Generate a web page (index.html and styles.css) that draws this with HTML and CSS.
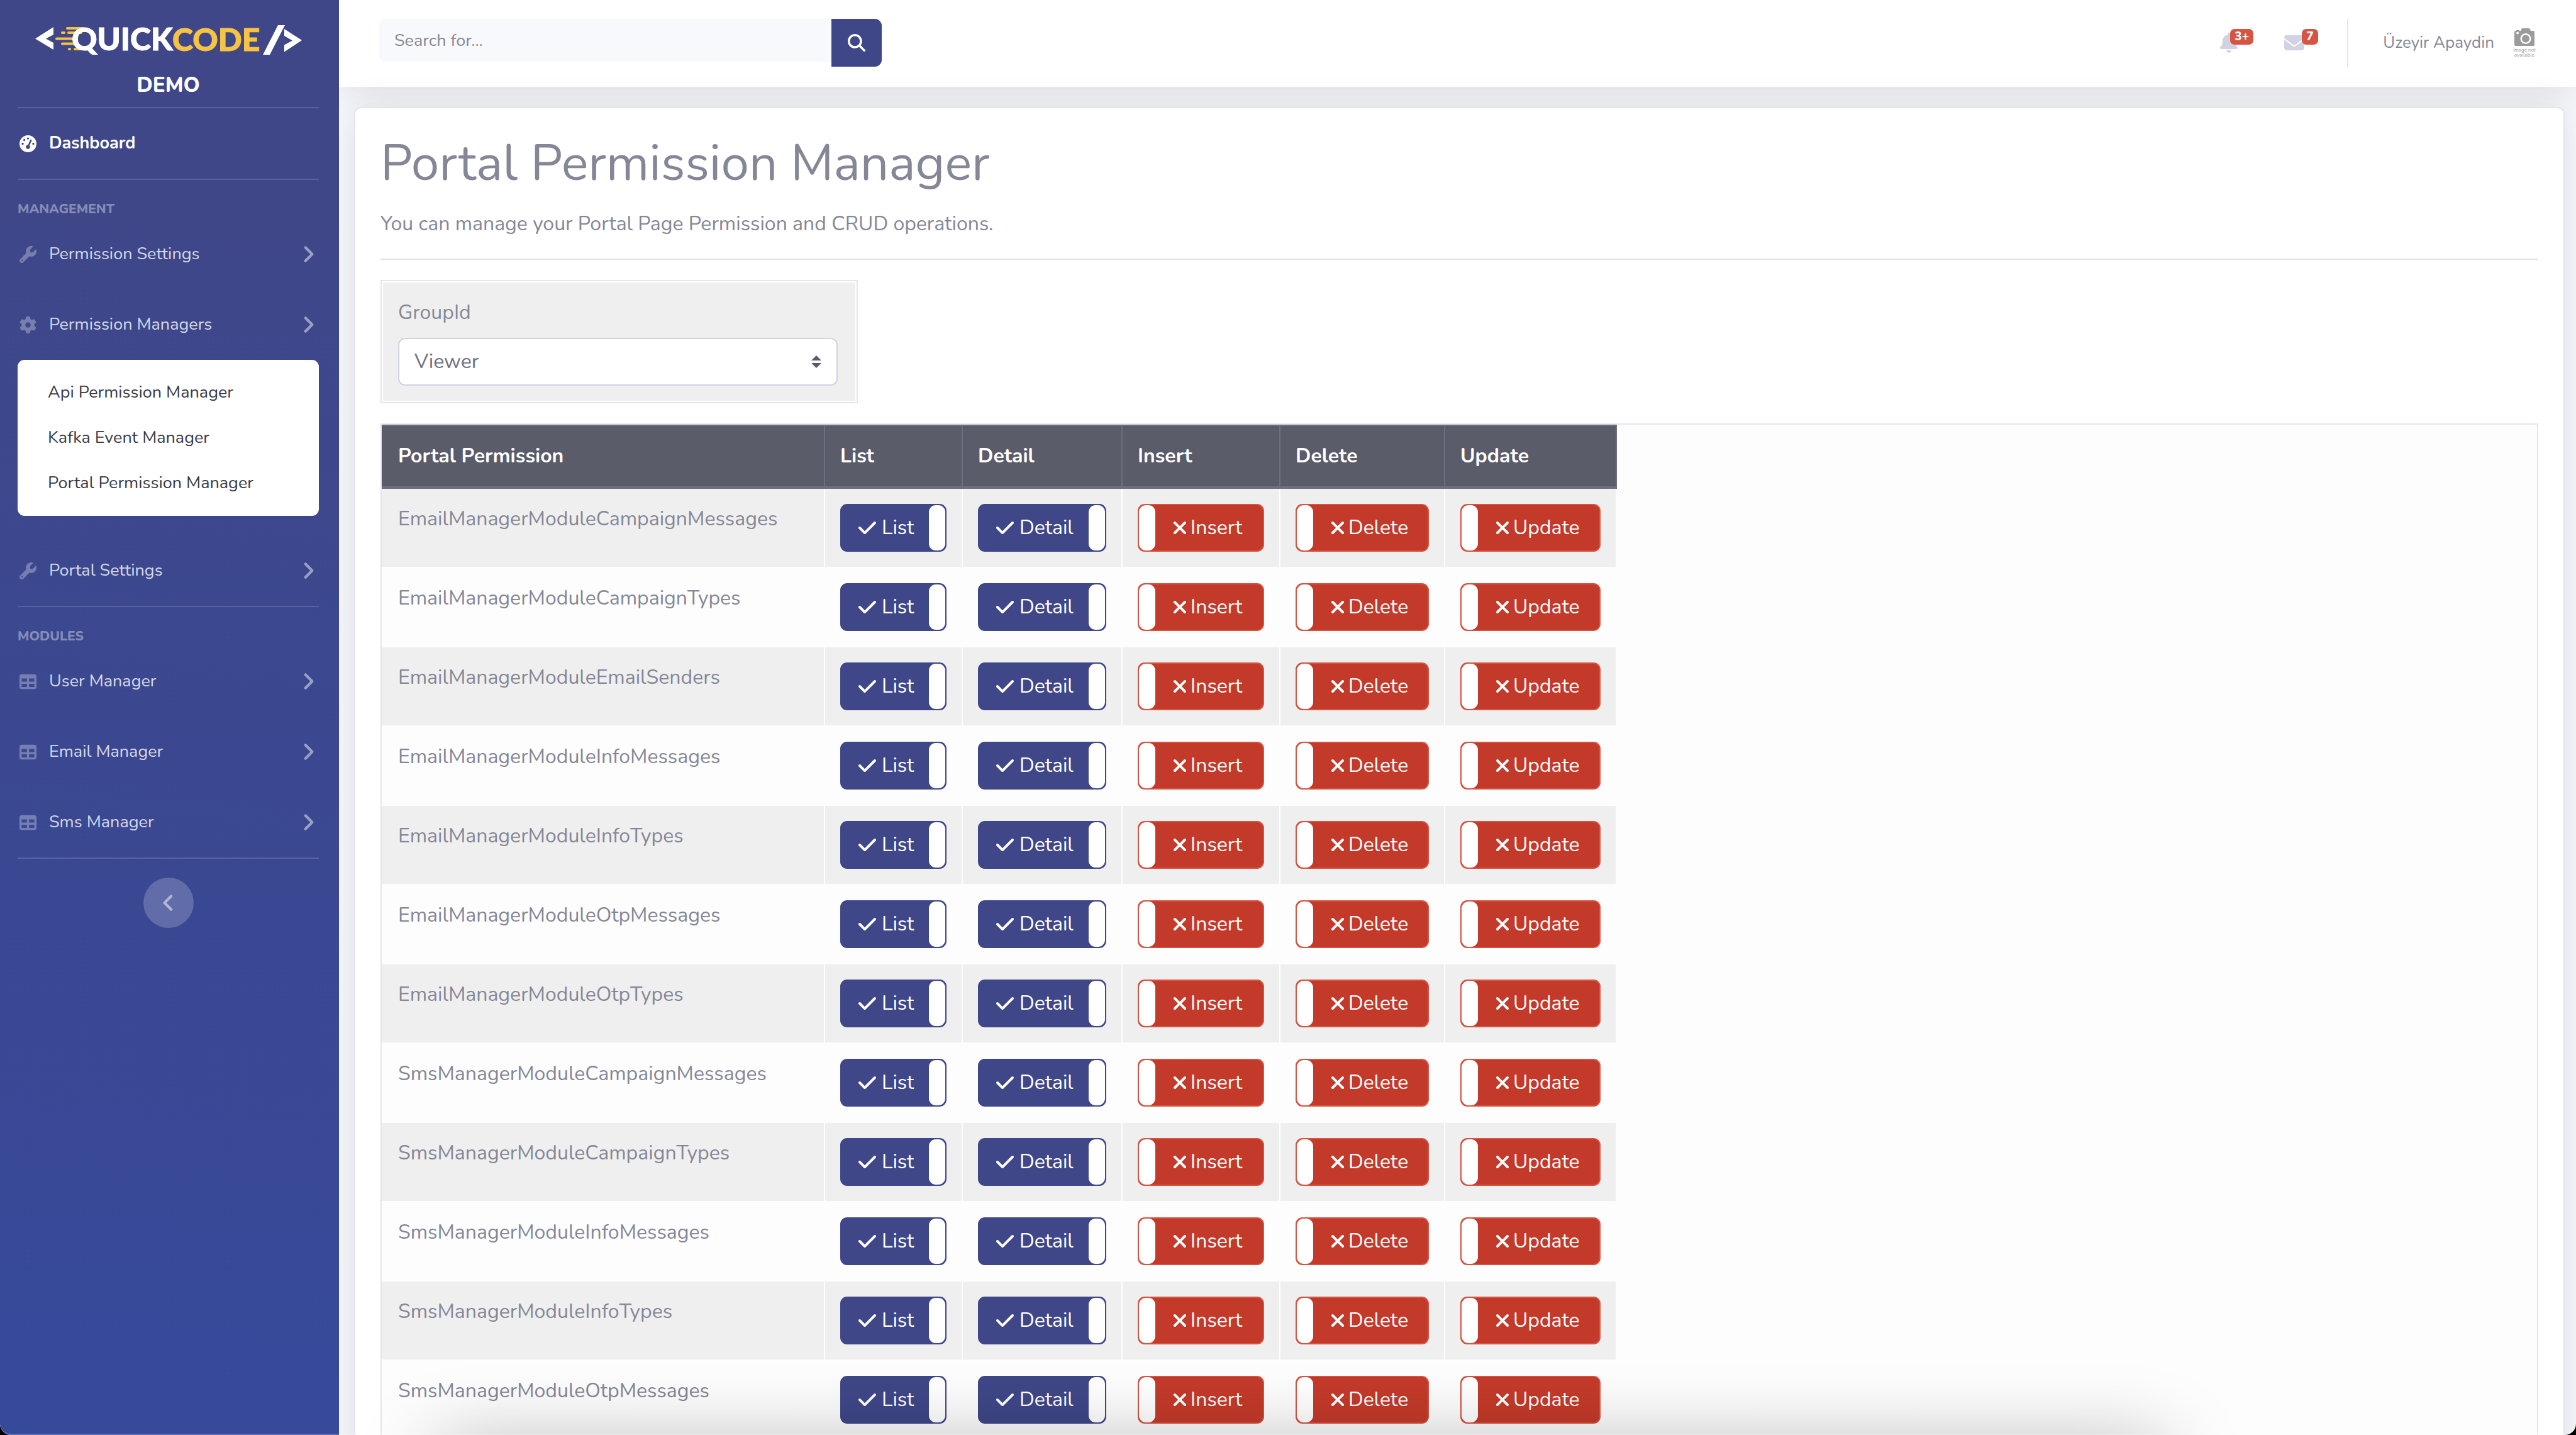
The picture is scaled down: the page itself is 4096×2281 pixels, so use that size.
FILE: index.html
```html
<!DOCTYPE html>
<html lang="en">
<head>
<meta charset="utf-8">
<title>Portal Permission Manager</title>
<link rel="stylesheet" href="styles.css">
</head>
<body>
<svg class="sprite" aria-hidden="true">
  <symbol id="i-gauge" viewBox="0 0 512 512"><path d="M0 256a256 256 0 1 1 512 0A256 256 0 1 1 0 256zM288 96a32 32 0 1 0-64 0 32 32 0 1 0 64 0zM256 416c35.300 0 64-28.700 64-64c0-17.400-6.900-33.100-18.100-44.600L366 161.700c5.300-12.100-.2-26.300-12.300-31.600s-26.300 .2-31.600 12.300L257.900 288c-.6 0-1.300 0-1.900 0c-35.300 0-64 28.700-64 64s28.700 64 64 64zM176 144a32 32 0 1 0-64 0 32 32 0 1 0 64 0zM96 288a32 32 0 1 0 0-64 32 32 0 1 0 0 64zm352-32a32 32 0 1 0-64 0 32 32 0 1 0 64 0z"/></symbol>
  <symbol id="i-wrench" viewBox="0 0 512 512"><path d="M352 320c88.400 0 160-71.600 160-160c0-15.300-2.200-30.100-6.200-44.200c-3.100-10.800-16.400-13.200-24.300-5.300l-76.800 76.800c-3 3-7.100 4.700-11.300 4.700H336c-8.800 0-16-7.200-16-16V118.600c0-4.200 1.700-8.300 4.700-11.300l76.800-76.800c7.900-7.900 5.400-21.200-5.300-24.300C382.100 2.200 367.300 0 352 0C263.600 0 192 71.600 192 160c0 19.100 3.400 37.500 9.500 54.500L19.900 396.100C7.200 408.800 0 426.100 0 444.100C0 481.600 30.400 512 67.900 512c18 0 35.300-7.200 48-19.900L297.500 310.500c17 6.200 35.400 9.500 54.500 9.500zM80 408a24 24 0 1 1 0 48 24 24 0 1 1 0-48z"/></symbol>
  <symbol id="i-gear" viewBox="0 0 512 512"><path d="M495.900 166.600c3.200 8.700 .5 18.400-6.400 24.600l-43.300 39.400c1.100 8.300 1.700 16.800 1.700 25.400s-.6 17.100-1.700 25.400l43.300 39.400c6.900 6.200 9.600 15.900 6.400 24.600c-4.400 11.900-9.700 23.300-15.800 34.300l-4.700 8.100c-6.600 11-14 21.400-22.100 31.200c-5.900 7.200-15.700 9.600-24.500 6.800l-55.700-17.700c-13.400 10.300-28.200 18.900-44 25.400l-12.500 57.100c-2 9.100-9 16.300-18.200 17.800c-13.800 2.300-28 3.500-42.500 3.500s-28.700-1.200-42.500-3.500c-9.200-1.500-16.200-8.700-18.200-17.800l-12.500-57.100c-15.800-6.500-30.600-15.100-44-25.400L83.100 425.900c-8.800 2.800-18.600 .3-24.500-6.800c-8.100-9.800-15.500-20.200-22.100-31.200l-4.700-8.100c-6.100-11-11.400-22.400-15.800-34.300c-3.200-8.700-.5-18.400 6.400-24.600l43.300-39.400C64.600 273.100 64 264.600 64 256s.6-17.100 1.700-25.400L22.400 191.200c-6.900-6.200-9.600-15.900-6.400-24.600c4.400-11.900 9.700-23.300 15.800-34.300l4.700-8.100c6.600-11 14-21.400 22.100-31.200c5.900-7.200 15.700-9.600 24.500-6.800l55.700 17.700c13.400-10.300 28.200-18.900 44-25.400l12.500-57.100c2-9.100 9-16.300 18.200-17.800C227.300 1.200 241.500 0 256 0s28.700 1.200 42.500 3.500c9.200 1.500 16.200 8.700 18.200 17.800l12.500 57.100c15.800 6.500 30.600 15.100 44 25.400l55.700-17.700c8.800-2.800 18.600-.3 24.500 6.800c8.100 9.800 15.500 20.200 22.100 31.200l4.700 8.100c6.100 11 11.400 22.400 15.800 34.300zM256 336a80 80 0 1 0 0-160 80 80 0 1 0 0 160z"/></symbol>
  <symbol id="i-table" viewBox="0 0 512 512"><path d="M64 256V160H224v96H64zm0 64H224v96H64V320zm224 96V320H448v96H288zM448 256H288V160H448v96zM64 32C28.700 32 0 60.700 0 96V416c0 35.300 28.700 64 64 64H448c35.300 0 64-28.700 64-64V96c0-35.300-28.700-64-64-64H64z"/></symbol>
  <symbol id="i-right" viewBox="0 0 320 512"><path d="M278.600 233.400c12.500 12.500 12.500 32.800 0 45.300l-160 160c-12.500 12.500-32.800 12.500-45.300 0s-12.500-32.800 0-45.300L210.700 256 73.400 118.600c-12.500-12.500-12.500-32.800 0-45.300s32.800-12.500 45.300 0l160 160z"/></symbol>
  <symbol id="i-left" viewBox="0 0 320 512"><path d="M41.400 233.400c-12.500 12.500-12.500 32.800 0 45.300l160 160c12.500 12.500 32.800 12.500 45.300 0s12.500-32.800 0-45.300L109.300 256 246.600 118.600c12.500-12.500 12.500-32.800 0-45.300s-32.800-12.500-45.300 0l-160 160z"/></symbol>
  <symbol id="i-search" viewBox="0 0 512 512"><path d="M416 208c0 45.900-14.900 88.300-40 122.700L502.600 457.400c12.500 12.500 12.500 32.800 0 45.300s-32.800 12.500-45.300 0L330.700 376c-34.400 25.200-76.800 40-122.700 40C93.100 416 0 322.900 0 208S93.100 0 208 0S416 93.100 416 208zM208 352a144 144 0 1 0 0-288 144 144 0 1 0 0 288z"/></symbol>
  <symbol id="i-bell" viewBox="0 0 448 512"><path d="M224 0c-17.700 0-32 14.300-32 32V51.200C119 66 64 130.600 64 208v18.800c0 47-17.300 92.400-48.500 127.600l-7.400 8.300c-8.400 9.400-10.400 22.900-5.300 34.400S19.400 416 32 416H416c12.600 0 24-7.400 29.200-18.900s3.100-25-5.300-34.400l-7.400-8.300C401.300 319.200 384 273.900 384 226.800V208c0-77.400-55-142-128-156.800V32c0-17.700-14.300-32-32-32zm45.300 493.300c12-12 18.700-28.300 18.700-45.300H224 160c0 17 6.700 33.300 18.700 45.300s28.300 18.700 45.300 18.700s33.300-6.700 45.300-18.700z"/></symbol>
  <symbol id="i-mail" viewBox="0 0 512 512"><path d="M48 64C21.500 64 0 85.500 0 112c0 15.100 7.100 29.300 19.200 38.400L236.800 313.600c11.400 8.500 27 8.500 38.400 0L492.800 150.400c12.100-9.100 19.200-23.300 19.200-38.400c0-26.500-21.500-48-48-48H48zM0 176V384c0 35.300 28.700 64 64 64H448c35.300 0 64-28.700 64-64V176L294.400 339.200c-22.800 17.100-54 17.100-76.800 0L0 176z"/></symbol>
  <symbol id="i-check" viewBox="0 0 448 512"><path d="M438.600 105.400c12.500 12.500 12.500 32.800 0 45.300l-256 256c-12.500 12.500-32.800 12.500-45.300 0l-128-128c-12.500-12.500-12.500-32.800 0-45.300s32.800-12.500 45.300 0L160 338.700 393.400 105.400c12.500-12.500 32.800-12.500 45.300 0z"/></symbol>
  <symbol id="i-x" viewBox="0 0 320 512"><path d="M310.600 150.600c12.500-12.500 12.500-32.800 0-45.300s-32.800-12.500-45.300 0L160 210.700 54.600 105.400c-12.500-12.500-32.800-12.500-45.300 0s-12.500 32.800 0 45.300L114.700 256 9.400 361.400c-12.500 12.500-12.500 32.800 0 45.300s32.800 12.500 45.300 0L160 301.300 265.400 406.600c12.500 12.500 32.800 12.500 45.300 0s12.500-32.800 0-45.300L205.300 256 310.600 150.600z"/></symbol>
</svg>

<div class="app">
  <nav class="sidebar">
    <a class="brand" href="#">
      <svg class="logo" viewBox="0 -12 424 72" role="img" aria-label="QuickCode">
        <path fill="#fff" d="M29 5v12l-12 6.500L29 30v11L0 23.500z"/>
        <g stroke="#f6c344" stroke-width="4" stroke-linecap="round"><path d="M51 7h24M43 14h3M53 14h20M34 23.500h28M43 31.500h22M54 40h1M63 40h12"/></g>
        <text class="logo-quick" x="58" y="42">QUICK</text>
        <text class="logo-code" x="218" y="43">CODE</text>
        <path fill="#fff" d="M386 2h11l-24 47h-11zM396 8v11l13 7.500-13 7v11l28-18.500z"/>
      </svg>
      <span class="brand-name">DEMO</span>
    </a>
    <hr class="rule">
    <a class="item active" href="#"><svg class="lead"><use href="#i-gauge"/></svg>Dashboard</a>
    <hr class="rule">
    <div class="heading">Management</div>
    <a class="item" href="#"><svg class="lead"><use href="#i-wrench"/></svg>Permission Settings<svg class="arrow"><use href="#i-right"/></svg></a>
    <a class="item" href="#"><svg class="lead"><use href="#i-gear"/></svg>Permission Managers<svg class="arrow"><use href="#i-right"/></svg></a>
    <div class="submenu">
      <a href="#">Api Permission Manager</a>
      <a href="#">Kafka Event Manager</a>
      <a href="#">Portal Permission Manager</a>
    </div>
    <a class="item" href="#"><svg class="lead"><use href="#i-wrench"/></svg>Portal Settings<svg class="arrow"><use href="#i-right"/></svg></a>
    <hr class="rule">
    <div class="heading">Modules</div>
    <a class="item" href="#"><svg class="lead"><use href="#i-table"/></svg>User Manager<svg class="arrow"><use href="#i-right"/></svg></a>
    <a class="item" href="#"><svg class="lead"><use href="#i-table"/></svg>Email Manager<svg class="arrow"><use href="#i-right"/></svg></a>
    <a class="item" href="#"><svg class="lead"><use href="#i-table"/></svg>Sms Manager<svg class="arrow"><use href="#i-right"/></svg></a>
    <hr class="rule">
    <button class="collapse" type="button" aria-label="Collapse sidebar"><svg><use href="#i-left"/></svg></button>
  </nav>

  <div class="page">
    <header class="topbar">
      <form class="search">
        <input type="text" placeholder="Search for..." aria-label="Search for">
        <button type="button" aria-label="Search"><svg><use href="#i-search"/></svg></button>
      </form>
      <div class="tools">
        <a class="alert bell" href="#" aria-label="Alerts"><svg><use href="#i-bell"/></svg><span class="badge">3+</span></a>
        <a class="alert mail" href="#" aria-label="Messages"><svg><use href="#i-mail"/></svg><span class="badge">7</span></a>
        <span class="separator"></span>
        <a class="user" href="#">Üzeyir Apaydin
          <svg class="avatar" viewBox="-6 0 44 52">
            <path fill="#9b9b9b" fill-rule="evenodd" d="M2 7h1V6h5v1h2l2-4h12l2 4h4q2 0 2 2v20q0 2-2 2H2q-2 0-2-2V9q0-2 2-2zM18 11a8.500 8.500 0 1 0 .1 0zM18 13.500a6 6 0 1 1-.1 0zM5 8.500a2 2 0 1 0 .1 0z"/>
            <text x="16" y="40">image not</text>
            <text x="16" y="48">available</text>
          </svg>
        </a>
      </div>
    </header>

    <main class="card">
      <h1>Portal Permission Manager</h1>
      <p>You can manage your Portal Page Permission and CRUD operations.</p>
      <hr>
      <div class="filter">
        <label for="group">GroupId</label>
        <div class="select">
          <select id="group"><option>Viewer</option></select>
          <svg viewBox="0 0 16 20"><path d="M8 0l8 8H0zM8 20l8-8H0z"/></svg>
        </div>
      </div>
      <div class="grid">
        <table>
          <colgroup><col class="c-name"><col class="c-list"><col class="c-detail"><col class="c-insert"><col class="c-delete"><col class="c-update"></colgroup>
          <thead><tr><th>Portal Permission</th><th>List</th><th>Detail</th><th>Insert</th><th>Delete</th><th>Update</th></tr></thead>
          <tbody id="rows"></tbody>
        </table>
      </div>
    </main>
  </div>
</div>
<script src="app.js"></script>
</body>
</html>
```
FILE: styles.css
```css
* { box-sizing: border-box; }
html { background: #000; }
body {
  margin: 0;
  font-family: Nunito, Lato, "Open Sans", sans-serif;
  font-size: 32px;
  line-height: 48px;
  color: #858796;
}
a { color: inherit; text-decoration: none; }
input, select, button { font: inherit; }
button { border: 0; padding: 0; cursor: pointer; }
svg { display: block; fill: currentColor; }
.sprite { position: absolute; width: 0; height: 0; }

.app {
  position: relative;
  display: flex;
  height: 100vh;
  overflow: hidden;
  background: #f8f9fc;
  border-radius: 0 0 18px 18px;
}
/* soft shade rising from the lower edge of the window */
.app::before {
  content: "";
  position: absolute;
  z-index: 2;
  top: 100%;
  left: 17%;
  right: 16%;
  height: 60px;
  box-shadow: 0 20px 120px rgba(0, 0, 0, .38);
}
.app::after {
  content: "";
  position: absolute;
  z-index: 3;
  inset: 0;
  border-bottom: 2px solid rgba(255, 255, 255, .2);
  border-radius: 0 0 18px 18px;
  pointer-events: none;
}

.sidebar {
  flex: none;
  width: 539px;
  padding: 26px 32px 0 28px;
  display: flex;
  flex-direction: column;
  font-size: 27px;
  color: rgba(255, 255, 255, .8);
  background: linear-gradient(185deg, #3f4788 12%, #36499b 100%);
}
.brand { display: flex; flex-direction: column; gap: 18px; align-items: center; padding-bottom: 14px; }
.logo { width: 424px; height: 72px; }
.logo text { font-family: Lato, sans-serif; font-size: 50px; font-weight: 900; }
.logo-quick { fill: #fff; stroke: #fff; stroke-width: 1; }
.logo-code { fill: #f6c344; stroke: #f6c344; stroke-width: 1; }
.brand-name { font-size: 33px; line-height: 40px; font-weight: 800; color: #fff; }
.rule { flex: none; width: 100%; height: 2px; margin: 0; border: 0; background: rgba(255, 255, 255, .15); }
.item { flex: none; display: flex; align-items: center; height: 112px; padding: 0 6px 0 3px; }
.item.active { color: #fff; font-weight: 700; }
.lead { width: 27px; height: 27px; margin-right: 20px; opacity: .38; }
.active .lead { opacity: 1; }
.arrow { width: 22px; height: 34px; margin-left: auto; opacity: .6; }
.heading { padding-top: 30px; font-size: 21px; line-height: 32px; font-weight: 800; text-transform: uppercase; color: rgba(255, 255, 255, .4); }
.submenu { display: flex; flex-direction: column; padding: 16px 48px; margin-bottom: 31px; border-radius: 11px; background: #fff; color: #3a3b45; }
.submenu a { line-height: 72px; }
.collapse { align-self: center; display: grid; place-items: center; width: 80px; height: 80px; margin-top: 30px; border-radius: 50%; background: rgba(255, 255, 255, .2); color: rgba(255, 255, 255, .5); }
.collapse svg { width: 22px; height: 34px; }

.page { flex: 1; min-width: 0; display: flex; flex-direction: column; overflow: hidden; }
.topbar { flex: none; display: flex; justify-content: space-between; height: 138px; padding: 30px 60px 32px 64px; background: #fff; box-shadow: 0 5px 56px rgba(58, 59, 69, .15); font-size: 26px; }
.search { display: flex; align-items: flex-start; width: 799px; }
.search input { flex: 1; min-width: 0; height: 69px; padding: 0 24px; border: 0; border-radius: 11px 0 0 11px; background: #f8f9fc; color: #6e707e; font-size: 27px; }
.search input::placeholder { color: #858796; opacity: 1; }
.search button { display: grid; place-items: center; width: 80px; height: 76px; border-radius: 0 11px 11px 0; background: #3f4788; color: #fff; }
.search svg { width: 28px; height: 28px; }
.tools { display: flex; align-items: center; }
.alert { position: relative; color: #d1d3e2; }
.alert svg { height: 32px; }
.bell { margin-right: 74px; }
.bell svg { width: 28px; }
.mail { margin-right: 68px; }
.mail svg { width: 32px; }
.badge { position: absolute; top: -6px; left: 16px; height: 25px; padding: 0 7px; border-radius: 7px; background: #d65442; color: #fff; font-size: 19px; line-height: 25px; font-weight: 800; }
.mail .badge { left: 28px; }
.separator { width: 2px; height: 76px; margin-right: 55px; background: #e3e6f0; }
.user { display: flex; align-items: center; gap: 26px; }
.avatar { width: 44px; height: 52px; }
.avatar text { font-size: 8px; text-anchor: middle; fill: #9b9b9b; }

.card { flex: 1 0 auto; margin: 32px 18px 0 24px; padding: 40px; border: 2px solid #e3e6f0; border-radius: 11px; background: #fff; box-shadow: 0 5px 56px rgba(58, 59, 69, .15); }
.card h1 { margin: 0 0 24px; font-size: 80px; line-height: 96px; font-weight: 400; }
.card p { margin: 0 0 31px; }
.card > hr { height: 2px; margin: 0 0 32px; border: 0; background: #e4e4e8; }
.filter { width: 759px; margin-bottom: 32px; padding: 26px 30px 26px 26px; border: 2px solid #e3e6f0; outline: 2px solid #fff; outline-offset: -4px; background: #efefef; }
.filter label { display: block; margin-bottom: 16px; }
.select { position: relative; }
.select select { display: block; width: 100%; height: 76px; padding: 0 24px; border: 2px solid #d1d3e2; border-radius: 11px; background: #fff; color: #6e707e; appearance: none; }
.select svg { position: absolute; right: 26px; top: 28px; width: 16px; height: 20px; fill: #5a5c69; pointer-events: none; }

.grid { border: 2px solid #e3e6f0; background: #fdfdfd; }
table { table-layout: fixed; width: 1964px; border-spacing: 0; }
.c-name { width: 705px; }
.c-list { width: 219px; }
.c-detail { width: 254px; }
.c-insert { width: 251px; }
.c-delete { width: 262px; }
.c-update { width: 273px; }
th { height: 102px; padding: 0 24px; border: 0 solid #6e7081; border-width: 2px 2px 4px 0; background: #5a5c69; color: #fff; font-weight: 700; text-align: left; }
td { height: 126px; padding: 24px; border: 0 solid #fdfdfd; border-width: 0 2px 2px 0; vertical-align: top; }
th:first-child, td:first-child { padding-left: 26px; }
tbody tr:nth-child(odd) { background: #efefef; }

.toggle { display: flex; align-items: center; height: 76px; border: 2px solid #3f4788; border-radius: 11px; background: #3f4788; color: #fff; cursor: pointer; }
.toggle input { flex: none; order: 3; appearance: none; width: 26px; height: 72px; margin: 0 0 0 auto; border-radius: 11px; background: #fff; }
.toggle svg { flex: none; width: 28px; height: 32px; margin: 0 9px 0 27px; }
.toggle.off { border-color: #d65442; background: #c43a2a; }
.toggle.off input { order: 0; margin: 0; }
.toggle.off svg { width: 20px; margin: 0 7px 0 29px; }
```
FILE: app.js
```js
const modules = [
  "EmailManagerModuleCampaignMessages",
  "EmailManagerModuleCampaignTypes",
  "EmailManagerModuleEmailSenders",
  "EmailManagerModuleInfoMessages",
  "EmailManagerModuleInfoTypes",
  "EmailManagerModuleOtpMessages",
  "EmailManagerModuleOtpTypes",
  "SmsManagerModuleCampaignMessages",
  "SmsManagerModuleCampaignTypes",
  "SmsManagerModuleInfoMessages",
  "SmsManagerModuleInfoTypes",
  "SmsManagerModuleOtpMessages"
];
const actions = [["List", true], ["Detail", true], ["Insert", false], ["Delete", false], ["Update", false]];

const toggle = ([name, on]) =>
  `<td><label class="toggle ${on ? "on" : "off"}"><input type="checkbox" ${on ? "checked" : ""}>` +
  `<svg><use href="#i-${on ? "check" : "x"}"/></svg>${name}</label></td>`;

document.getElementById("rows").innerHTML = modules
  .map(name => `<tr><td>${name}</td>${actions.map(toggle).join("")}</tr>`)
  .join("");
```
